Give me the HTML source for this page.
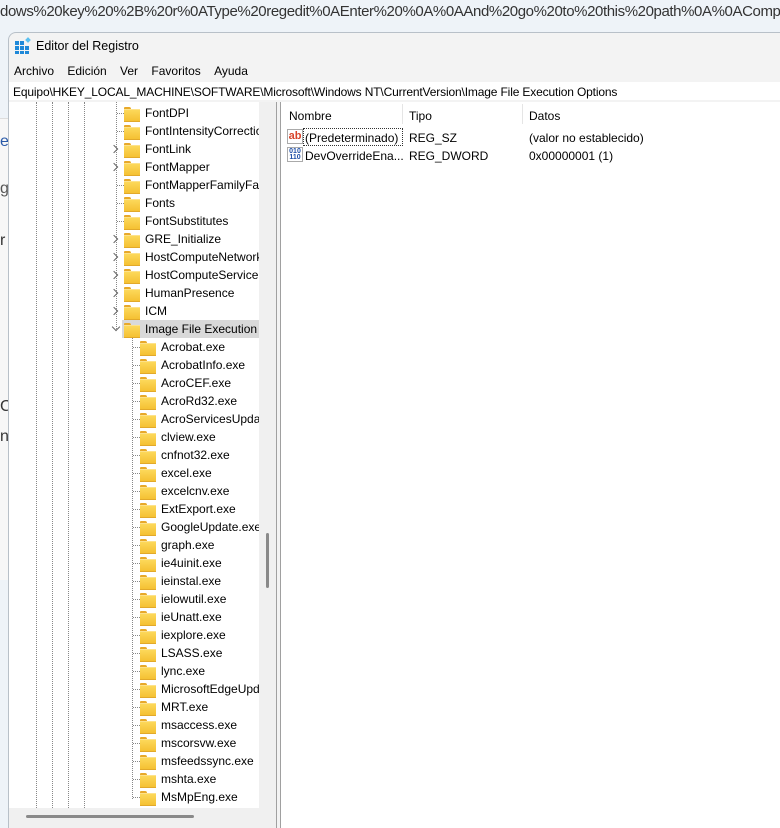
<!DOCTYPE html>
<html><head><meta charset="utf-8"><style>
*{margin:0;padding:0;box-sizing:border-box}
html,body{width:780px;height:828px;overflow:hidden}
body{background:#eef3f8;font-family:"Liberation Sans",sans-serif;font-size:12px;color:#000;position:relative}
.a{position:absolute;white-space:nowrap}
.url{left:0;top:3px;font-size:15px;color:#333;letter-spacing:-0.4px;width:780px;overflow:hidden}
.win{left:8px;top:32px;width:772px;height:796px;background:#f3f3f3;border:1px solid #b8c0c8;border-right:none;border-bottom:none;border-radius:8px 0 0 0}
.row{position:absolute;height:18px;line-height:18px;white-space:nowrap}
.fold{position:absolute;width:16px;height:13px;top:3px}
.fold:before{content:"";position:absolute;left:0;top:0;width:7px;height:4px;background:#e8a92a;border-radius:1px 2px 0 0}
.fold:after{content:"";position:absolute;left:0;top:2px;width:16px;height:11px;background:linear-gradient(#fcd85a,#f5c133);border-top:1px solid #fde28a;border-bottom:1px solid #e2a92a}
.vd{position:absolute;width:0;border-left:1px dotted #888}
.hd{position:absolute;height:0;border-top:1px dotted #888}
.chev{position:absolute;width:6px;height:6px;border-right:1.3px solid #666;border-bottom:1.3px solid #666}
</style></head><body>
<div class="a url">dows%20key%20%2B%20r%0AType%20regedit%0AEnter%20%0A%0AAnd%20go%20to%20this%20path%0A%0AComputer%5</div>
<div class="a" style="left:0;top:118px;width:8px;height:462px;background:#f7f7f7;border-top:1px solid #ddd"></div>
<div class="a" style="left:0;top:133px;color:#2a5aa8;font-size:16px">e</div>
<div class="a" style="left:0;top:180px;color:#555;font-size:16px">g</div>
<div class="a" style="left:0;top:232px;color:#333;font-size:16px">r</div>
<div class="a" style="left:0;top:398px;color:#333;font-size:16px">C</div>
<div class="a" style="left:0;top:428px;color:#333;font-size:16px">n</div>
<div class="a win"></div>
<svg class="a" style="left:14px;top:37px" width="18" height="18" viewBox="0 0 18 18"><g fill="#1e88d8"><rect x="1" y="4" width="4" height="4"/><rect x="6" y="4" width="4" height="4"/><rect x="1" y="9" width="4" height="4"/><rect x="6" y="9" width="4" height="4"/><rect x="11" y="9" width="4" height="4"/><rect x="1" y="14" width="4" height="3"/><rect x="6" y="14" width="4" height="3"/><rect x="11" y="14" width="4" height="3"/></g><rect x="12" y="1" width="4" height="4" fill="#5bc0f0" transform="rotate(45 14 3)"/></svg>
<div class="a" style="left:36px;top:39px;font-size:12.5px">Editor del Registro</div>
<div class="a" style="left:14px;top:64px;font-size:12px">Archivo&nbsp;&nbsp;&nbsp;&nbsp;Edición&nbsp;&nbsp;&nbsp;&nbsp;Ver&nbsp;&nbsp;&nbsp;&nbsp;Favoritos&nbsp;&nbsp;&nbsp;&nbsp;Ayuda</div>
<div class="a" style="left:9px;top:82px;width:771px;height:18px;background:#fff"></div>
<div class="a" style="left:13px;top:85px;font-size:12px;letter-spacing:-0.15px">Equipo\HKEY_LOCAL_MACHINE\SOFTWARE\Microsoft\Windows NT\CurrentVersion\Image File Execution Options</div>
<div class="a" style="left:9px;top:102px;width:250px;height:706px;background:#fff;overflow:hidden" id="tree">
<div class="vd" style="left:27px;top:0;height:706px"></div>
<div class="vd" style="left:43px;top:0;height:706px"></div>
<div class="vd" style="left:59px;top:0;height:706px"></div>
<div class="vd" style="left:75px;top:0;height:706px"></div>
<div class="vd" style="left:107px;top:0;height:227px"></div>
<div class="vd" style="left:123px;top:235px;height:462px"></div>
<div class="row" style="left:113px;top:218px;width:137px;background:#d9d9d9"></div>
</div>
<div class="a" style="left:259px;top:102px;width:17px;height:706px;background:#f0f0f0"></div>
<div class="a" style="left:266px;top:533px;width:3px;height:55px;background:#8a8a8a;border-radius:2px"></div>
<div class="a" style="left:276px;top:102px;width:1px;height:726px;background:#a0a0a0"></div>
<div class="a" style="left:280px;top:102px;width:1px;height:726px;background:#a0a0a0"></div>
<div class="a" style="left:9px;top:808px;width:267px;height:20px;background:#f0f0f0"></div>
<div class="a" style="left:26px;top:815px;width:168px;height:3px;background:#8a8a8a;border-radius:2px"></div>
<div class="a" style="left:281px;top:102px;width:499px;height:726px;background:#fff"></div>
<div class="a" style="left:402px;top:104px;width:1px;height:20px;background:#e5e5e5"></div>
<div class="a" style="left:522px;top:104px;width:1px;height:20px;background:#e5e5e5"></div>
<div class="a" style="left:289px;top:109px">Nombre</div>
<div class="a" style="left:409px;top:109px">Tipo</div>
<div class="a" style="left:529px;top:109px">Datos</div>
<div class="a" style="left:287px;top:129px;width:16px;height:15px;border:1px solid #aaa;background:#fff;color:#d8442a;font-weight:bold;font-size:11px;line-height:12px;text-align:center">ab</div>
<div class="a" style="left:303px;top:128px;width:100px;height:18px;border:1px dotted #333"></div>
<div class="a" style="left:305px;top:131px">(Predeterminado)</div>
<div class="a" style="left:409px;top:131px">REG_SZ</div>
<div class="a" style="left:529px;top:131px">(valor no establecido)</div>
<div class="a" style="left:287px;top:147px;width:16px;height:15px;border:1px solid #aaa;background:#fff;color:#1f4fa8;font-weight:bold;font-size:7px;line-height:6px;text-align:center;padding-top:1px">010<br>110</div>
<div class="a" style="left:305px;top:149px">DevOverrideEna...</div>
<div class="a" style="left:409px;top:149px">REG_DWORD</div>
<div class="a" style="left:529px;top:149px">0x00000001 (1)</div>
<script>
var t=document.getElementById('tree');
var L1=[["FontDPI",0],["FontIntensityCorrection",0],["FontLink",1],["FontMapper",1],["FontMapperFamilyFallback",0],["Fonts",0],["FontSubstitutes",0],["GRE_Initialize",1],["HostComputeNetwork",1],["HostComputeService",1],["HumanPresence",1],["ICM",1],["Image File Execution Options",2]];
var L2=["Acrobat.exe","AcrobatInfo.exe","AcroCEF.exe","AcroRd32.exe","AcroServicesUpdater.exe","clview.exe","cnfnot32.exe","excel.exe","excelcnv.exe","ExtExport.exe","GoogleUpdate.exe","graph.exe","ie4uinit.exe","ieinstal.exe","ielowutil.exe","ieUnatt.exe","iexplore.exe","LSASS.exe","lync.exe","MicrosoftEdgeUpdate.exe","MRT.exe","msaccess.exe","mscorsvw.exe","msfeedssync.exe","mshta.exe","MsMpEng.exe"];
var h='';
L1.forEach(function(e,i){var y=2+18*i;
 if(e[1]==0)h+='<div class="hd" style="left:108px;top:'+(y+9)+'px;width:7px"></div>';
 else if(e[1]==1)h+='<div class="chev" style="left:102px;top:'+(y+6)+'px;transform:rotate(-45deg)"></div>';
 else h+='<div class="chev" style="left:104px;top:'+(y+4)+'px;transform:rotate(45deg)"></div>';
 h+='<div class="fold" style="left:115px;top:'+(y+3)+'px"></div><div class="row" style="left:136px;top:'+y+'px">'+e[0]+'</div>';});
L2.forEach(function(e,i){var y=2+18*(i+13);
 h+='<div class="hd" style="left:124px;top:'+(y+9)+'px;width:7px"></div><div class="fold" style="left:131px;top:'+(y+3)+'px"></div><div class="row" style="left:152px;top:'+y+'px">'+e+'</div>';});
t.insertAdjacentHTML('beforeend',h);
</script>
</body></html>
